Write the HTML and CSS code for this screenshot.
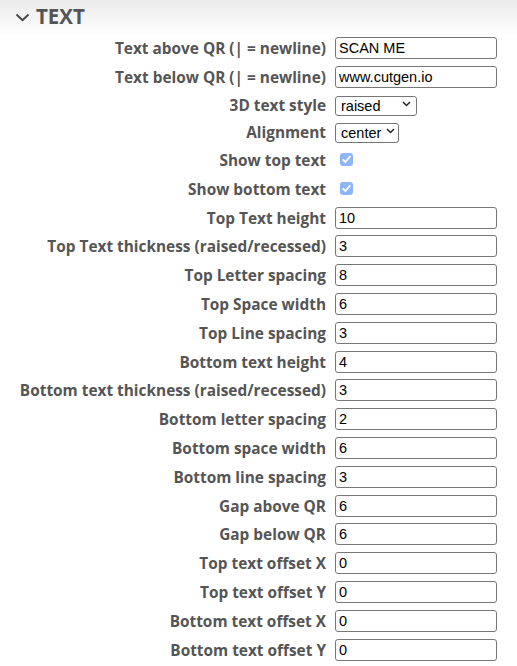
FILE: index.html
```html
<!DOCTYPE html>
<html>
<head>
<meta charset="utf-8">
<link rel="stylesheet" href="styles.css">
</head>
<body>
<section class="panel">
  <header class="panel-head">
    <svg class="chev" width="15" height="10" viewBox="0 0 15 10"><path d="M1.5 2.5 L7.5 8.2 L13.5 2.5" fill="none" stroke="#444" stroke-width="1.9"/></svg>
    <span class="title">TEXT</span>
  </header>
  <div class="form">
    <label class="lbl">Text above QR (| = newline)</label><div class="ctl"><input class="txt" type="text" value="SCAN ME"></div>
    <label class="lbl">Text below QR (| = newline)</label><div class="ctl"><input class="txt" type="text" value="www.cutgen.io"></div>
    <label class="lbl">3D text style</label><div class="ctl"><span class="sel sel-style"><select><option>raised</option></select><svg class="arrow" width="9" height="6" viewBox="0 0 9 6"><path d="M1 1 L4.5 4.5 L8 1" fill="none" stroke="#222" stroke-width="1.5"/></svg></span></div>
    <label class="lbl">Alignment</label><div class="ctl"><span class="sel sel-align"><select><option>center</option></select><svg class="arrow" width="9" height="6" viewBox="0 0 9 6"><path d="M1 1 L4.5 4.5 L8 1" fill="none" stroke="#222" stroke-width="1.5"/></svg></span></div>
    <label class="lbl">Show top text</label><div class="ctl"><span class="chk"><svg width="13" height="13" viewBox="0 0 13 13"><rect width="13" height="13" rx="3" fill="#8db6f7"/><path d="M3.2 6.8 L5.4 9 L9.8 3.8" fill="none" stroke="#fff" stroke-width="1.8" stroke-linecap="round" stroke-linejoin="round"/></svg></span></div>
    <label class="lbl">Show bottom text</label><div class="ctl"><span class="chk"><svg width="13" height="13" viewBox="0 0 13 13"><rect width="13" height="13" rx="3" fill="#8db6f7"/><path d="M3.2 6.8 L5.4 9 L9.8 3.8" fill="none" stroke="#fff" stroke-width="1.8" stroke-linecap="round" stroke-linejoin="round"/></svg></span></div>
    <label class="lbl">Top Text height</label><div class="ctl"><input class="txt" type="text" value="10"></div>
    <label class="lbl">Top Text thickness (raised/recessed)</label><div class="ctl"><input class="txt" type="text" value="3"></div>
    <label class="lbl">Top Letter spacing</label><div class="ctl"><input class="txt" type="text" value="8"></div>
    <label class="lbl">Top Space width</label><div class="ctl"><input class="txt" type="text" value="6"></div>
    <label class="lbl">Top Line spacing</label><div class="ctl"><input class="txt" type="text" value="3"></div>
    <label class="lbl">Bottom text height</label><div class="ctl"><input class="txt" type="text" value="4"></div>
    <label class="lbl">Bottom text thickness (raised/recessed)</label><div class="ctl"><input class="txt" type="text" value="3"></div>
    <label class="lbl">Bottom letter spacing</label><div class="ctl"><input class="txt" type="text" value="2"></div>
    <label class="lbl">Bottom space width</label><div class="ctl"><input class="txt" type="text" value="6"></div>
    <label class="lbl">Bottom line spacing</label><div class="ctl"><input class="txt" type="text" value="3"></div>
    <label class="lbl">Gap above QR</label><div class="ctl"><input class="txt" type="text" value="6"></div>
    <label class="lbl">Gap below QR</label><div class="ctl"><input class="txt" type="text" value="6"></div>
    <label class="lbl">Top text offset X</label><div class="ctl"><input class="txt" type="text" value="0"></div>
    <label class="lbl">Top text offset Y</label><div class="ctl"><input class="txt" type="text" value="0"></div>
    <label class="lbl">Bottom text offset X</label><div class="ctl"><input class="txt" type="text" value="0"></div>
    <label class="lbl">Bottom text offset Y</label><div class="ctl"><input class="txt" type="text" value="0"></div>
  </div>
</section>
</body>
</html>
```
FILE: styles.css
```css
html, body {
  margin: 0;
  padding: 0;
  background: #fff;
}
body {
  font-family: "Open Sans", "Liberation Sans", sans-serif;
  color: #555;
}
.panel {
  width: 517px;
}
.panel-head {
  height: 33.6px;
  display: flex;
  align-items: center;
  padding-left: 15px;
  gap: 6px;
  background: linear-gradient(#ebebeb, #fdfdfd);
  box-sizing: border-box;
  padding-bottom: 1px;
}
.chev {
  display: block;
  margin-top: 1px;
}
.title {
  font-size: 20.5px;
  font-weight: 700;
  color: #555;
  letter-spacing: 0;
}
.form {
  display: grid;
  grid-template-columns: 326px 1fr;
  grid-template-rows: 28.8px 28.8px 27.2px 27.2px repeat(18, 28.8px);
  column-gap: 9px;
  align-items: center;
}
.lbl {
  text-align: right;
  font-size: 15.4px;
  font-weight: 700;
  color: #555;
  white-space: nowrap;
  line-height: 20px;
  padding-top: 2px;
}
.ctl {
  display: flex;
  align-items: center;
}
.txt {
  box-sizing: border-box;
  width: 162px;
  height: 22px;
  margin: 0;
  padding: 1px 3px;
  border: 1px solid #767676;
  border-radius: 3px;
  font-family: "Liberation Sans", Arial, sans-serif;
  font-size: 14.5px;
  color: #000;
  background: #fff;
  outline: none;
}
.sel {
  position: relative;
  display: inline-block;
}
.sel select {
  appearance: none;
  -webkit-appearance: none;
  box-sizing: border-box;
  height: 20px;
  margin: 0;
  padding: 0 0 0 5px;
  border: 1px solid #767676;
  border-radius: 3px;
  background: #fff;
  font-family: "Liberation Sans", Arial, sans-serif;
  font-size: 14.5px;
  color: #000;
  line-height: 18px;
}
.sel-style select {
  width: 82px;
}
.sel-align select {
  width: 64px;
}
.sel .arrow {
  position: absolute;
  top: 7px;
  right: 6px;
  pointer-events: none;
}
.sel-align .arrow {
  right: 4px;
}
.chk {
  display: block;
  margin-left: 5px;
  width: 13px;
  height: 13px;
}
.chk svg {
  display: block;
}
```
